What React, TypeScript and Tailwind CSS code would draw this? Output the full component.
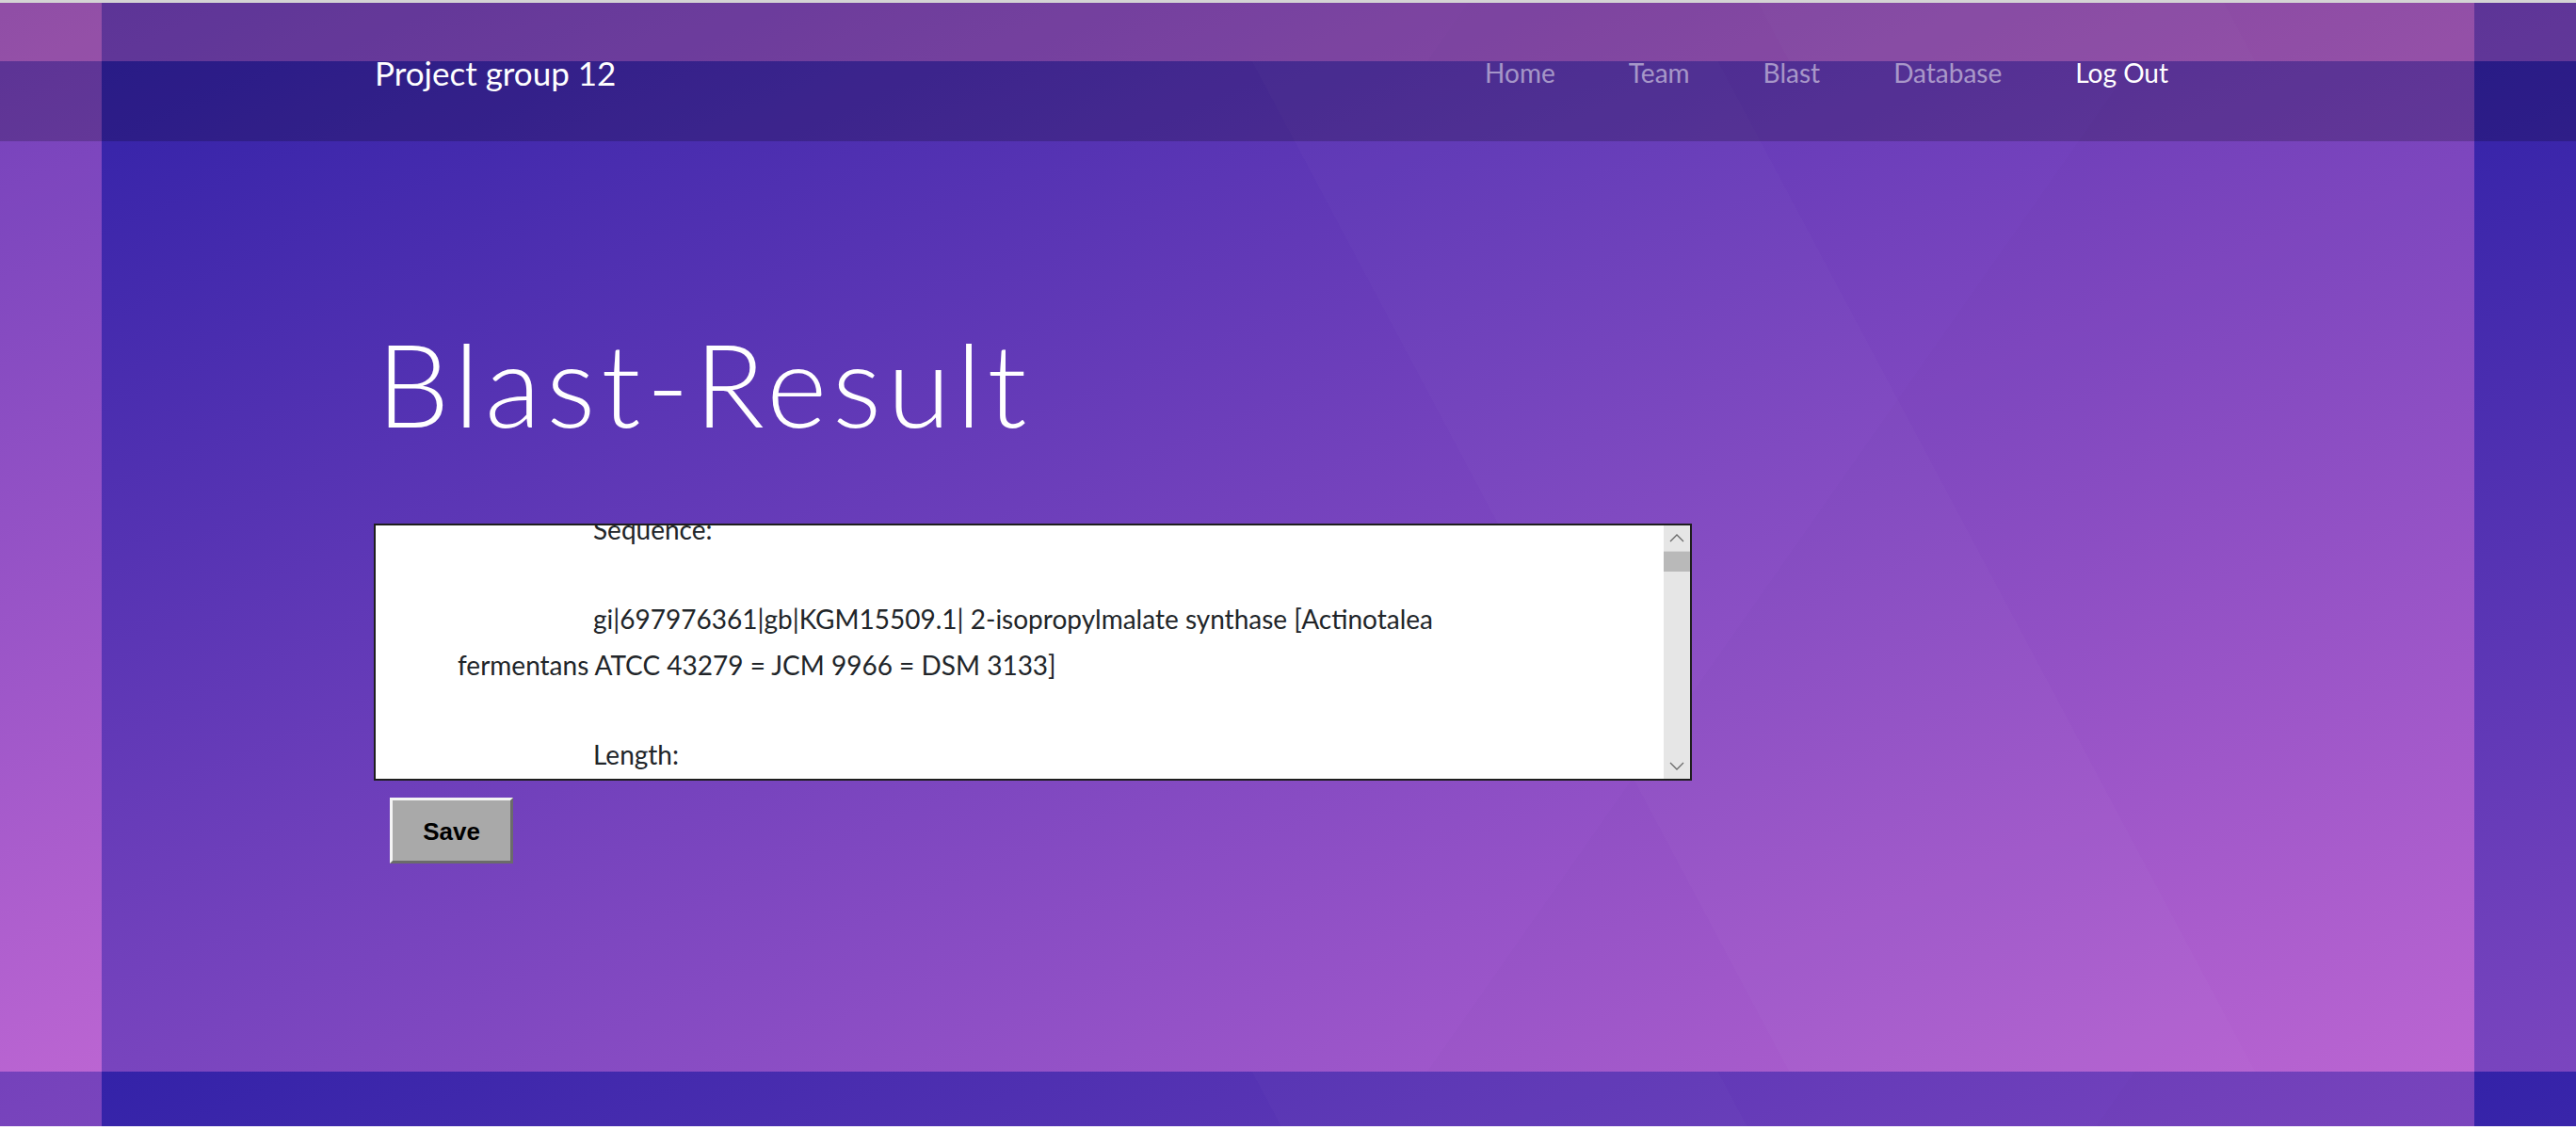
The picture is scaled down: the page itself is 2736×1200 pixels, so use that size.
export default function App() {
  const links = ['Home', 'Team', 'Blast', 'Database'];

  return (
    <div className="w-[2736px] bg-white" style={{ fontFamily: 'Lato, "Open Sans", sans-serif' }}>
      {/* browser chrome line */}
      <div className="h-[3px] bg-[#d4d4d4]"></div>

      {/* page with tiled gradient background */}
      <div className="h-[1193px] flex flex-col bg-[linear-gradient(62deg,transparent_58%,rgba(255,255,255,0.015)_58%,rgba(255,255,255,0.015)_74%,transparent_74%),linear-gradient(125deg,transparent_66%,rgba(0,0,0,0.012)_66%),linear-gradient(to_bottom_right,#3322a8,#bd66d4)] bg-[length:2520px_1073px] bg-[position:108px_62px] bg-repeat">
        {/* Nav */}
        <nav className="h-[147px] bg-black/20 pt-[53px]">
          <div className="w-[1942px] mx-auto flex items-center h-[42px]">
            <span className="text-[35px] leading-[42px] text-white pl-[1px]">Project group 12</span>
            <div className="ml-auto flex items-center">
              {links.map((l) => (
                <a key={l} className="px-[39px] text-[28px] leading-[42px] text-white/50">
                  {l}
                </a>
              ))}
              <a className="pl-[39px] pr-[36px] text-[28px] leading-[42px] text-white">Log Out</a>
            </div>
          </div>
        </nav>

        {/* Content */}
        <main className="w-[1942px] mx-auto flex flex-col items-start">
          <h1 className="mt-[183px] text-[122.5px] leading-[147px] font-light text-white pl-[3px] tracking-[6px]">
            Blast-Result
          </h1>

          <div className="mt-[76px] w-[1400px] h-[273px] border-2 border-[#1e1e1e] bg-white flex">
            <div className="flex-1 overflow-hidden px-[87px] text-[28px] leading-[49px] text-[#212529]">
              <div className="-mt-[20px]">
                <p className="pl-[144px] mb-[46px]">Sequence:</p>
                <p className="mb-[46px]">
                  <span className="block pl-[144px] whitespace-nowrap">
                    gi|697976361|gb|KGM15509.1| 2-isopropylmalate synthase [Actinotalea
                  </span>
                  <span className="block whitespace-nowrap">fermentans ATCC 43279 = JCM 9966 = DSM 3133]</span>
                </p>
                <p className="pl-[144px]">Length:</p>
              </div>
            </div>
            {/* scrollbar */}
            <div className="w-[28px] bg-[#e6e6e6] flex flex-col">
              <div className="h-[28px] flex items-center justify-center border-b border-[#d4d4d4]">
                <svg width="16" height="9" viewBox="0 0 16 9">
                  <polyline points="1,8 8,1 15,8" fill="none" stroke="#6b6b6b" strokeWidth="1.3" />
                </svg>
              </div>
              <div className="h-[21px] bg-[#b9b9b9]"></div>
              <div className="flex-1"></div>
              <div className="h-[28px] flex items-center justify-center">
                <svg width="16" height="9" viewBox="0 0 16 9">
                  <polyline points="1,1 8,8 15,1" fill="none" stroke="#6b6b6b" strokeWidth="1.3" />
                </svg>
              </div>
            </div>
          </div>

          <button className="mt-[18px] ml-[17px] w-[131px] h-[70px] pt-[2px] bg-[#a9a9a9] border-[3px] border-t-[#f4f4f4] border-l-[#f4f4f4] border-b-[#6b6b6b] border-r-[#6b6b6b] text-[26px] font-bold text-black" style={{ fontFamily: '"Liberation Sans", Arial, sans-serif' }}>
            Save
          </button>
        </main>
      </div>
    </div>
  );
}
